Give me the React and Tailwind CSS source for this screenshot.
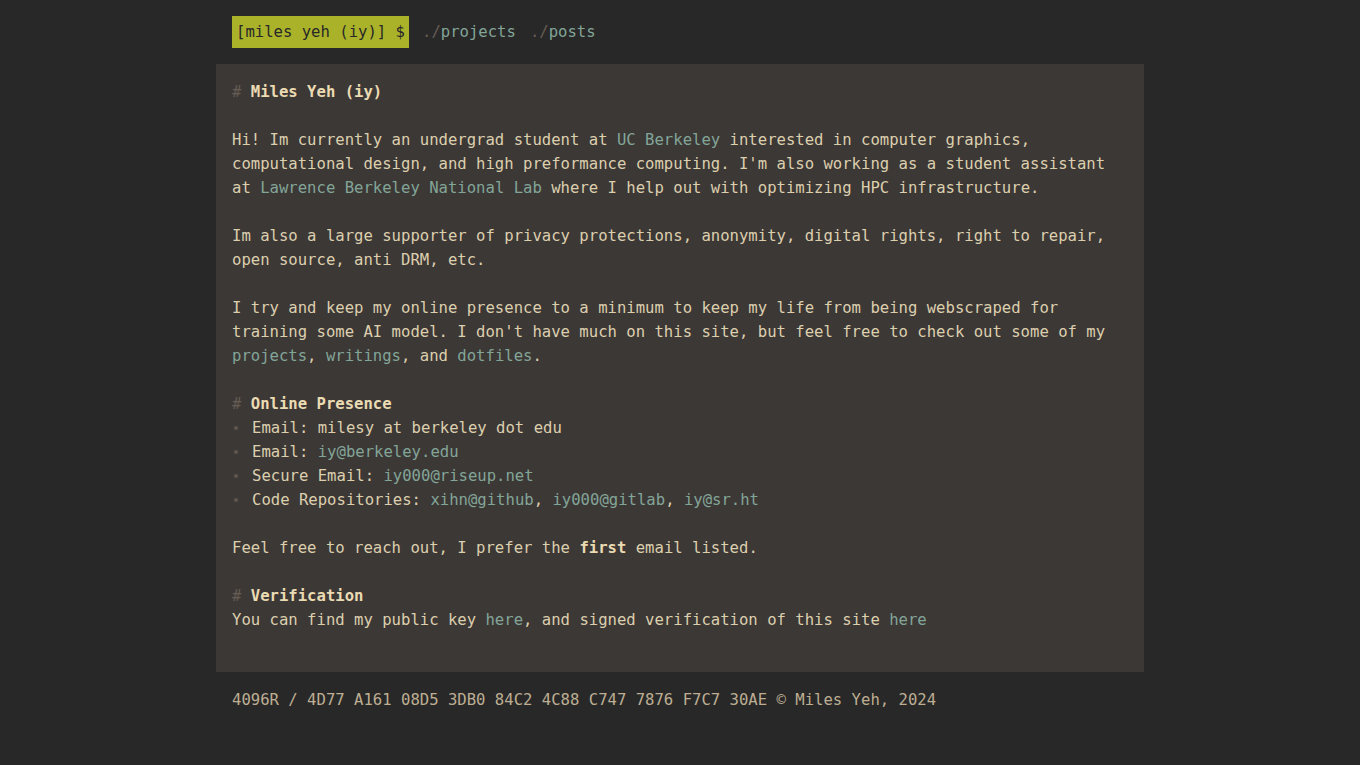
export default function App() {
  const L = ({ children }) => <span className="text-[#83a598]">{children}</span>;
  const H = ({ children }) => (
    <div>
      <span className="text-[#665c54]">#</span>{" "}
      <span className="font-bold text-[#ebdbb2]">{children}</span>
    </div>
  );
  const B = ({ children }) => (
    <div className="flex h-6 items-center">
      <span className="w-5 shrink-0 flex items-center pl-[2px]">
        <span className="block w-[4px] h-[4px] rounded-full bg-[#5f5650]" />
      </span>
      <span>{children}</span>
    </div>
  );
  const Blank = () => <div className="h-6" />;
  return (
    <div
      className="min-h-[765px] bg-[#282828] text-[#dccfae] text-[15.6px] leading-6"
      style={{ fontFamily: '"DejaVu Sans Mono", monospace' }}
    >
      <div className="w-[928px] mx-auto">
        <nav className="flex items-center px-4 py-4 whitespace-pre">
          <span className="bg-[#aab22a] text-[#282828] px-1 py-1">[miles yeh (iy)] $</span>
          <span className="ml-[13px]">
            <span className="text-[#665c54]">./</span>
            <L>projects</L>
          </span>
          <span className="ml-[14px]">
            <span className="text-[#665c54]">./</span>
            <L>posts</L>
          </span>
        </nav>
        <main className="bg-[#3c3836] px-4 pt-4 pb-10 whitespace-pre">
          <H>Miles Yeh (iy)</H>
          <Blank />
          <div>
            Hi! Im currently an undergrad student at <L>UC Berkeley</L> interested in computer graphics,
            <br />
            computational design, and high preformance computing. I'm also working as a student assistant
            <br />
            at <L>Lawrence Berkeley National Lab</L> where I help out with optimizing HPC infrastructure.
          </div>
          <Blank />
          <div>
            Im also a large supporter of privacy protections, anonymity, digital rights, right to repair,
            <br />
            open source, anti DRM, etc.
          </div>
          <Blank />
          <div>
            I try and keep my online presence to a minimum to keep my life from being webscraped for
            <br />
            training some AI model. I don't have much on this site, but feel free to check out some of my
            <br />
            <L>projects</L>, <L>writings</L>, and <L>dotfiles</L>.
          </div>
          <Blank />
          <H>Online Presence</H>
          <B>Email: milesy at berkeley dot edu</B>
          <B>
            Email: <L>iy@berkeley.edu</L>
          </B>
          <B>
            Secure Email: <L>iy000@riseup.net</L>
          </B>
          <B>
            Code Repositories: <L>xihn@github</L>, <L>iy000@gitlab</L>, <L>iy@sr.ht</L>
          </B>
          <Blank />
          <div>
            Feel free to reach out, I prefer the <span className="font-bold text-[#ebdbb2]">first</span> email listed.
          </div>
          <Blank />
          <H>Verification</H>
          <div>
            You can find my public key <L>here</L>, and signed verification of this site <L>here</L>
          </div>
        </main>
        <footer className="px-4 py-4 text-[#bdae93] whitespace-pre">
          4096R / 4D77 A161 08D5 3DB0 84C2 4C88 C747 7876 F7C7 30AE © Miles Yeh, 2024
        </footer>
      </div>
    </div>
  );
}
